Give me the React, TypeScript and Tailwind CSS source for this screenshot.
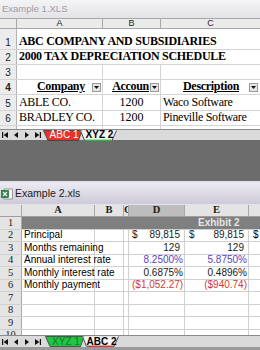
const serif = "font-['Liberation_Serif',serif]";
const sans = "font-['Liberation_Sans',Arial,sans-serif]";

function NavArrows() {
  return (
    <div className="flex items-center gap-[5px] pl-[2px] pr-[2px] shrink-0">
      <svg width="6" height="6" viewBox="0 0 6 6"><rect x="0" y="0" width="1.2" height="6" fill="#111" /><polygon points="6,0 6,6 1.6,3" fill="#111" /></svg>
      <svg width="6" height="6" viewBox="0 0 6 6"><polygon points="5,0 5,6 1,3" fill="#111" /></svg>
      <svg width="6" height="6" viewBox="0 0 6 6"><polygon points="1,0 1,6 5,3" fill="#111" /></svg>
      <svg width="6" height="6" viewBox="0 0 6 6"><polygon points="0,0 0,6 4.4,3" fill="#111" /><rect x="4.8" y="0" width="1.2" height="6" fill="#111" /></svg>
    </div>
  );
}

function ColorTab({ label, fill, color }: { label: string; fill: string; color: string }) {
  return (
    <div className="relative w-[40px] h-full shrink-0 flex items-center justify-center">
      <svg className="absolute inset-0" width="40" height="11" viewBox="0 0 40 11">
        <polygon points="0.5,0.5 39,0.5 35.5,10.5 5,10.5" fill={fill} stroke="#3a3a3a" strokeWidth="0.8" />
      </svg>
      <span className={`relative text-[10px] leading-none pl-[2px] ${sans}`} style={{ color }}>{label}</span>
    </div>
  );
}

function ActiveTab({ label, line }: { label: string; line: string }) {
  return (
    <div className="relative w-[37px] h-full shrink-0 flex items-center justify-center -ml-[3px]">
      <svg className="absolute inset-0" width="37" height="11" viewBox="0 0 37 11">
        <polygon points="0,0.5 32,0.5 36.5,0 32,10.5 5,10.5" fill="#f4f4f4" />
        <line x1="0.5" y1="0.5" x2="4.5" y2="10.5" stroke="#3a3a3a" strokeWidth="0.9" />
        <line x1="32" y1="10.5" x2="36.5" y2="0.5" stroke="#3a3a3a" strokeWidth="0.9" />
        <line x1="5" y1="10.3" x2="32" y2="10.3" stroke={line} strokeWidth="1.4" />
      </svg>
      <span className={`relative text-[10px] leading-none font-bold text-black pl-[2px] ${sans}`}>{label}</span>
    </div>
  );
}

function Drop() {
  return (
    <span className="w-[9px] h-[9px] shrink-0 bg-[#e4e4e4] border border-[#9a9a9a] flex items-center justify-center">
      <svg width="5" height="3" viewBox="0 0 5 3"><polygon points="0,0 5,0 2.5,3" fill="#111" /></svg>
    </span>
  );
}

function Workbook1() {
  const num = `w-[17px] shrink-0 bg-[#ececec] border-r border-[#b4b4b4] flex items-end justify-center pb-[1px] text-[10px] leading-none text-[#222] ${sans}`;
  const row = "flex border-b border-[#d4d4d4]";
  return (
    <div className="h-[140px] flex flex-col bg-white">
      <div className={`h-[18px] shrink-0 flex items-center pl-[2px] bg-gradient-to-b from-[#f4f4f6] to-[#e3e3e7] text-[9.5px] text-[#9c9ca4] ${sans}`}>
        Example 1.XLS
      </div>
      <div className={`h-[11px] shrink-0 flex bg-[#ebebeb] border-y border-[#a8a8a8] text-[9px] leading-none text-[#222] ${sans}`}>
        <div className="w-[17px] border-r border-[#a8a8a8]" />
        <div className="w-[86px] border-r border-[#a8a8a8] flex items-center justify-center">A</div>
        <div className="w-[58px] border-r border-[#a8a8a8] flex items-center justify-center">B</div>
        <div className="flex-1 flex items-center justify-center">C</div>
      </div>
      <div className={`flex-1 overflow-hidden ${serif} text-black`}>
        <div className={`${row} h-[21px]`}>
          <div className={num}>1</div>
          <div className="flex-1 flex items-end pl-[2px] text-[12px] font-bold leading-none pb-[2px] tracking-[-0.3px] whitespace-nowrap">ABC COMPANY AND SUBSIDIARIES</div>
        </div>
        <div className={`${row} h-[15px]`}>
          <div className={num}>2</div>
          <div className="flex-1 flex items-end pl-[2px] text-[12px] font-bold leading-none pb-[2px] tracking-[-0.3px] whitespace-nowrap">2000 TAX DEPRECIATION SCHEDULE</div>
        </div>
        <div className={`${row} h-[15px]`}>
          <div className={num}>3</div>
          <div className="w-[86px] border-r border-[#d4d4d4]" />
          <div className="w-[58px] border-r border-[#d4d4d4]" />
          <div className="flex-1" />
        </div>
        <div className={`${row} h-[15px] text-[12px] font-bold leading-none`}>
          <div className={num}>4</div>
          <div className="w-[86px] border-r border-[#d4d4d4] flex items-end justify-between pl-[20px] pr-[1px] pb-[2px]">
            <span className="underline tracking-[-0.3px]">Company</span><Drop />
          </div>
          <div className="w-[58px] border-r border-[#d4d4d4] flex items-end justify-end gap-[1px] pr-[1px] pb-[2px] overflow-hidden">
            <span className="underline tracking-[-0.3px] whitespace-nowrap">Accoun</span><Drop />
          </div>
          <div className="flex-1 flex items-end justify-between pl-[22px] pr-[2px] pb-[2px]">
            <span className="underline tracking-[-0.3px]">Description</span><Drop />
          </div>
        </div>
        {[["5", "ABLE CO.", "Waco Software", "h-[16px]"], ["6", "BRADLEY CO.", "Pineville Software", "h-[15px]"]].map(([n, a, c, h]) => (
          <div key={n} className={`${row} ${h} text-[12px] leading-none`}>
            <div className={num}>{n}</div>
            <div className="w-[86px] border-r border-[#d4d4d4] flex items-end pl-[2px] pb-[2px] tracking-[-0.3px]">{a}</div>
            <div className="w-[58px] border-r border-[#d4d4d4] flex items-end justify-center pb-[2px]">1200</div>
            <div className="flex-1 flex items-end pl-[2px] pb-[2px] tracking-[-0.3px] whitespace-nowrap">{c}</div>
          </div>
        ))}
        <div className="flex h-[15px]">
          <div className="w-[17px] bg-[#ececec] border-r border-[#b4b4b4]" />
          <div className="w-[86px] border-r border-[#d4d4d4]" />
          <div className="w-[58px] border-r border-[#d4d4d4]" />
        </div>
      </div>
      <div className="h-[11px] shrink-0 flex bg-[#dadada] border-t border-[#8a8a8a]">
        <NavArrows />
        <ColorTab label="ABC 1" fill="#e8332c" color="#ffffff" />
        <ActiveTab label="XYZ 2" line="#1fbf3a" />
      </div>
    </div>
  );
}

function ExcelIcon() {
  return (
    <svg width="12" height="12" viewBox="0 0 12 12" className="shrink-0">
      <rect x="3" y="1" width="8.5" height="10" fill="#f4f4f4" stroke="#6a6a6a" strokeWidth="0.6" />
      <rect x="0.5" y="2.5" width="7" height="7" fill="#1e8a3a" stroke="#0f5a22" strokeWidth="0.6" />
      <path d="M2 4 L6 8 M6 4 L2 8" stroke="#fff" strokeWidth="1.2" />
    </svg>
  );
}

function Workbook2() {
  const num = `w-[22px] shrink-0 bg-[#e4e4e4] border-r border-[#a8a8a8] flex items-center justify-center text-[10.5px] leading-none text-[#222] ${serif}`;
  const cell = "border-r border-[#d0d0d0] shrink-0";
  const rows: [string, string, string, string, string][] = [
    ["2", "Principal", "89,815", "89,815", "money"],
    ["3", "Months remaining", "129", "129", "count"],
    ["4", "Annual interest rate", "8.2500%", "5.8750%", "blue"],
    ["5", "Monthly interest rate", "0.6875%", "0.4896%", "plain"],
    ["6", "Monthly payment", "($1,052.27)", "($940.74)", "red"],
    ["7", "", "", "", ""],
    ["8", "", "", "", ""],
    ["9", "", "", "", ""],
    ["10", "", "", "", ""],
  ];
  const tone: Record<string, string> = { blue: "text-[#5a3fc0]", red: "text-[#d23a34]", plain: "text-[#1a1a1a]", count: "text-[#1a1a1a]", money: "text-[#1a1a1a]", "": "" };
  return (
    <div className="h-[169px] flex flex-col bg-white">
      <div className={`h-[24px] shrink-0 flex items-center gap-[2px] pl-[1px] bg-gradient-to-b from-[#ecebf2] to-[#cdc9d8] border-t-[2px] border-[#e4e2ec] border-b border-[#9a98a4] text-[10.5px] text-[#1c1c1c] ${sans}`}>
        <ExcelIcon />
        <span>Example 2.xls</span>
      </div>
      <div className={`h-[12px] shrink-0 flex bg-[#e4e4e4] border-b border-[#9e9e9e] text-[10.5px] font-bold leading-none text-[#1c1c1c] ${serif}`}>
        <div className="w-[22px] shrink-0 border-r border-[#a8a8a8]" />
        <div className="w-[73px] shrink-0 border-r border-[#a8a8a8] flex items-center justify-center">A</div>
        <div className="w-[29px] shrink-0 border-r border-[#a8a8a8] flex items-center justify-center">B</div>
        <div className="w-[5px] shrink-0 border-r border-[#a8a8a8] overflow-hidden flex items-center">C</div>
        <div className="w-[56px] shrink-0 border-r border-[#a8a8a8] bg-[#bdbdbd] flex items-center justify-center">D</div>
        <div className="w-[64px] shrink-0 border-r border-[#a8a8a8] flex items-center justify-center">E</div>
        <div className="flex-1" />
      </div>
      <div className={`flex-1 overflow-hidden ${sans}`}>
        <div className="flex h-[12.5px] border-b border-[#d0d0d0]">
          <div className={num}>1</div>
          <div className="flex-1 bg-[#7f7f7f] flex items-center text-[10px] font-bold text-[#e6e6e6] leading-none">
            <span className="pl-[176px]">Exhibit 2</span>
          </div>
        </div>
        {rows.map(([n, label, d, e, kind]) => (
          <div key={n} className="flex h-[12.5px] border-b border-[#d0d0d0] text-[10px] leading-none">
            <div className={num}>{n}</div>
            <div className={`w-[73px] ${cell} flex items-center pl-[2px] whitespace-nowrap`}>{label}</div>
            <div className={`w-[29px] ${cell}`} />
            <div className={`w-[5px] ${cell}`} />
            <div className={`w-[56px] ${cell} flex items-center justify-between pl-[3px] ${kind === "money" || kind === "count" ? "pr-[4px]" : "pr-[1px]"} ${tone[kind]}`}>
              <span>{kind === "money" ? "$" : ""}</span><span>{d}</span>
            </div>
            <div className={`w-[64px] ${cell} flex items-center justify-between pl-[4px] ${kind === "money" || kind === "count" ? "pr-[4px]" : "pr-[1px]"} ${tone[kind]}`}>
              <span>{kind === "money" ? "$" : ""}</span><span>{e}</span>
            </div>
            <div className="flex-1 flex items-center pl-[4px]">{kind === "money" ? "$" : ""}</div>
          </div>
        ))}
      </div>
      <div className="h-[12px] shrink-0 flex bg-[#dadada] border-t border-[#8a8a8a]">
        <NavArrows />
        <div className="w-[2px]" />
        <ColorTab label="XYZ 1" fill="#22c443" color="#137a2a" />
        <ActiveTab label="ABC 2" line="#e0322c" />
      </div>
      <div className="h-[3px] shrink-0 bg-[#9a9a9a]" />
    </div>
  );
}

export default function App() {
  return (
    <div className="w-[260px] h-[350px] overflow-hidden flex flex-col bg-[#6b6b6b]">
      <Workbook1 />
      <div className="h-[41px] shrink-0 bg-[#6c6c6c]" />
      <Workbook2 />
    </div>
  );
}
